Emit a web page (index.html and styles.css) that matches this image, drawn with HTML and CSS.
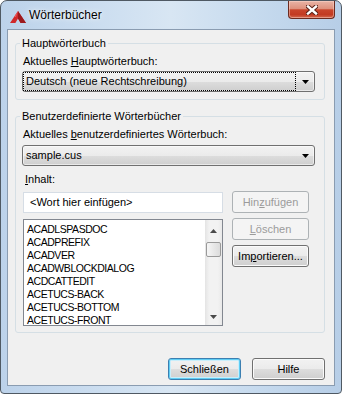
FILE: index.html
```html
<!DOCTYPE html>
<html lang="de">
<head>
<meta charset="utf-8">
<title>Wörterbücher</title>
<link rel="stylesheet" href="styles.css">
</head>
<body>
<div class="window">
  <div class="titlebar">
    <svg class="app-icon" width="16" height="12" viewBox="0 0 16 12" aria-hidden="true">
      <path d="M8 0 L16 12 H10.6 L8 7.6 L5.4 12 H0 Z" fill="#d0282b"/>
      <path d="M8 0 L16 12 H10.6 L8 7.6 Z" fill="#9c1a1d"/>
      <path d="M8 0 L4 6 L6 6 Z" fill="#e8555a"/>
    </svg>
    <span class="title">Wörterbücher</span>
    <button class="close" aria-label="Schließen">
      <svg width="12" height="10" viewBox="0 0 12 10" aria-hidden="true">
        <path d="M2 1.5 L10 8.5 M10 1.5 L2 8.5" stroke="#5a2218" stroke-width="4.4" stroke-linecap="square" fill="none"/>
        <path d="M2 1.5 L10 8.5 M10 1.5 L2 8.5" stroke="#ffffff" stroke-width="2.4" stroke-linecap="square" fill="none"/>
      </svg>
    </button>
  </div>
  <div class="client">
    <fieldset class="group g1">
      <legend>Hauptwörterbuch</legend>
      <div class="label l1">Aktuelles <u>H</u>auptwörterbuch:</div>
      <div class="combo">
        <span class="focus-rect">Deutsch (neue Rechtschreibung)</span>
        <svg class="arrow" width="7" height="4" viewBox="0 0 7 4" aria-hidden="true"><path d="M0 0H7L3.5 4Z" fill="#000"/></svg>
      </div>
    </fieldset>
    <fieldset class="group g2">
      <legend>Benutzerdefinierte Wörterbücher</legend>
      <div class="label l2">Aktuelles <u>b</u>enutzerdefiniertes Wörterbuch:</div>
      <div class="combo c2">
        <span class="combo-text">sample.cus</span>
        <svg class="arrow" width="7" height="4" viewBox="0 0 7 4" aria-hidden="true"><path d="M0 0H7L3.5 4Z" fill="#000"/></svg>
      </div>
      <div class="label l3"><u>I</u>nhalt:</div>
      <div class="content">
        <div class="left">
          <div class="textbox">&lt;Wort hier einfügen&gt;</div>
          <div class="listbox">
            <ul class="items">
              <li>ACADLSPASDOC</li>
              <li>ACADPREFIX</li>
              <li>ACADVER</li>
              <li>ACADWBLOCKDIALOG</li>
              <li>ACDCATTEDIT</li>
              <li>ACETUCS-BACK</li>
              <li>ACETUCS-BOTTOM</li>
              <li>ACETUCS-FRONT</li>
            </ul>
            <div class="scrollbar">
              <div class="sb-up"><svg width="7" height="4" viewBox="0 0 7 4" aria-hidden="true"><path d="M0 4H7L3.5 0Z" fill="#4a4a4a"/></svg></div>
              <div class="thumb"></div>
              <div class="sb-down"><svg width="7" height="4" viewBox="0 0 7 4" aria-hidden="true"><path d="M0 0H7L3.5 4Z" fill="#4a4a4a"/></svg></div>
            </div>
          </div>
        </div>
        <div class="side-buttons">
          <button class="btn" disabled>Hin<u>z</u>ufügen</button>
          <button class="btn" disabled><u>L</u>öschen</button>
          <button class="btn">Im<u>p</u>ortieren...</button>
        </div>
      </div>
    </fieldset>
    <div class="footer">
      <button class="btn default">Schließen</button>
      <button class="btn">Hilfe</button>
    </div>
  </div>
</div>
</body>
</html>
```
FILE: styles.css
```css
* { box-sizing: border-box; }
html, body { margin: 0; padding: 0; }
body {
  width: 342px;
  height: 394px;
  overflow: hidden;
  background: #ffffff;
  font-family: "Liberation Sans", Arial, sans-serif;
  font-size: 11px;
  color: #000;
}
u { text-decoration: underline; text-underline-offset: 1px; }

.window {
  width: 342px;
  height: 394px;
  border: 1px solid #4f5963;
  border-radius: 7px 7px 4px 4px;
  background: linear-gradient(to right, #bcd2ea 0%, #cfe0f1 35%, #d8e6f3 50%, #c6daee 75%, #b7cee7 100%);
  display: flex;
  flex-direction: column;
  padding: 0 6px 7px 6px;
}

.titlebar {
  height: 28px;
  display: flex;
  align-items: flex-start;
  padding-left: 3px;
}
.app-icon { margin-top: 10px; flex: none; }
.title {
  margin-top: 7px;
  margin-left: 3px;
  font-size: 12px;
  line-height: 14px;
  color: #000;
  text-shadow: 0 0 6px rgba(255,255,255,0.9), 0 0 2px rgba(255,255,255,0.9);
}
.close {
  margin-left: auto;
  width: 47px;
  height: 18px;
  padding: 0;
  border: 1px solid #6b2b20;
  border-top: none;
  border-radius: 0 0 4px 4px;
  background: linear-gradient(#e9b4a6 0%, #de917d 45%, #c9452c 52%, #c23a22 80%, #d36a50 100%);
  box-shadow: inset 0 0 0 1px rgba(255,220,210,0.45);
  display: flex;
  align-items: center;
  justify-content: center;
}

.client {
  flex: 1;
  border: 1px solid #8a9cb1;
  background: #f0f0f0;
  display: flex;
  flex-direction: column;
  padding-left: 7px;
}

.group {
  width: 310px;
  min-width: 0;
  margin: 0;
  border: 1px solid #d5dfe5;
  border-radius: 3px;
  padding: 0 7px 7px 7px;
}
.g1 { margin-top: 7px; }
.g2 { margin-top: 10px; padding-bottom: 6px; }
legend {
  padding: 0 2px;
  margin-left: -3px;
  line-height: 13px;
}

.label { line-height: 13px; white-space: nowrap; }
.l1 { margin-top: 5px; }
.l2 { margin-top: 5px; }
.l3 { margin-top: 7px; padding-left: 2px; }

.combo {
  display: flex;
  align-items: center;
  width: 293px;
  height: 21px;
  margin-left: -1px;
  margin-top: 3px;
  border: 1px solid #707070;
  border-radius: 3px;
  background: linear-gradient(#f2f2f2 0%, #ebebeb 50%, #dddddd 51%, #cfcfcf 100%);
  box-shadow: inset 0 0 0 1px rgba(255,255,255,0.55);
}
.c2 { margin-top: 4px; }
.focus-rect {
  width: 273px;
  height: 19px;
  border: 1px dotted #000;
  padding-left: 2px;
  line-height: 17px;
  white-space: nowrap;
}
.combo-text { flex: 1; padding-left: 3px; line-height: 19px; }
.arrow { margin-left: auto; margin-right: 5px; flex: none; }

.content {
  display: grid;
  grid-template-columns: 200px 77px;
  column-gap: 9px;
  margin-top: 5px;
}
.left { display: flex; flex-direction: column; }
.textbox {
  margin-top: 1px;
  height: 21px;
  border: 1px solid #d6dde5;
  background: #fff;
  padding-left: 6px;
  line-height: 19px;
}
.listbox {
  margin-top: 6px;
  height: 107px;
  border: 1px solid #828790;
  background: #fff;
  display: flex;
  overflow: hidden;
}
.items {
  flex: 1;
  margin: 0;
  padding: 3px 0 0 3px;
  list-style: none;
  overflow: hidden;
  font-size: 10.5px;
  letter-spacing: -0.45px;
  line-height: 13px;
}
.scrollbar {
  width: 17px;
  flex: none;
  display: flex;
  flex-direction: column;
  align-items: center;
  background: linear-gradient(to right, #e4e4e4, #f2f2f2 25%, #f2f2f2 75%, #e9e9e9);
}
.sb-up { height: 22px; display: flex; align-items: center; justify-content: center; }
.sb-down { height: 17px; margin-top: auto; display: flex; align-items: center; justify-content: center; }
.thumb {
  width: 15px;
  height: 15px;
  border: 1px solid #9a9a9a;
  border-radius: 2px;
  background: linear-gradient(to right, #f6f6f6, #e6e6e6 60%, #dcdcdc);
}

.side-buttons { display: flex; flex-direction: column; gap: 5px; }

.btn {
  font: inherit;
  color: #000;
  height: 22px;
  width: 77px;
  padding: 0;
  border: 1px solid #707070;
  border-radius: 3px;
  background: linear-gradient(#f2f2f2 0%, #ebebeb 50%, #dddddd 51%, #cfcfcf 100%);
  box-shadow: inset 0 0 0 1px #fbfbfb;
  white-space: nowrap;
}
.btn:disabled {
  border-color: #adb2b5;
  background: #f4f4f4;
  color: #9b9b9b;
  box-shadow: none;
}
.btn.default {
  border-color: #3c7fb1;
  box-shadow: inset 0 0 0 1px #5fcdf4, inset 0 0 0 2px #c9eefb;
}

.footer {
  display: flex;
  justify-content: flex-end;
  gap: 11px;
  width: 310px;
  margin-top: 25px;
}
.footer .btn { width: 73px; }
```
